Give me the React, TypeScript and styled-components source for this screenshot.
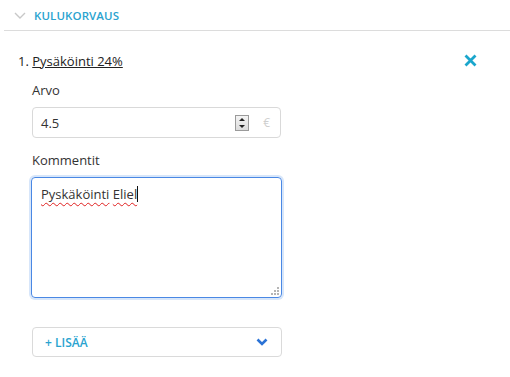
import React from "react";
import styled, { createGlobalStyle } from "styled-components";

const GlobalStyle = createGlobalStyle`
  html, body {
    margin: 0;
    padding: 0;
    background: #fff;
    font-family: "Open Sans", "Liberation Sans", sans-serif;
    color: #333;
  }
`;

const Page = styled.div`
  width: 510px;
  height: 377px;
  overflow: hidden;
`;

const SectionHeader = styled.div`
  display: flex;
  align-items: center;
  gap: 8px;
  height: 31px;
  margin-left: 4px;
  padding-left: 10px;
  border-bottom: 1px solid #dcdcdc;
  box-sizing: border-box;
`;

const SectionTitle = styled.span`
  font-size: 11.5px;
  font-weight: 600;
  color: #2aa3cf;
  letter-spacing: 0.1px;
`;

const Body = styled.div`
  padding: 21px 32px 0 18px;
`;

const ItemRow = styled.div`
  display: flex;
  align-items: center;
  justify-content: space-between;
  height: 18px;
`;

const ItemTitle = styled.span`
  font-size: 13px;
  color: #222;

  a {
    color: #222;
    text-decoration: underline;
  }
`;

const CloseButton = styled.button`
  border: 0;
  background: none;
  padding: 0;
  width: 14px;
  height: 14px;
  display: flex;
  cursor: pointer;
`;

const Fields = styled.div`
  padding-left: 14px;
  display: flex;
  flex-direction: column;
`;

const Label = styled.div<{ $top: number }>`
  font-size: 13px;
  color: #333;
  margin-top: ${(p) => p.$top}px;
  margin-bottom: 8px;
  line-height: 18px;
`;

const InputBox = styled.div`
  width: 249px;
  height: 31px;
  box-sizing: border-box;
  border: 1px solid #d9d9d9;
  border-radius: 4px;
  display: flex;
  align-items: center;
  padding: 0 8px 0 8px;
  font-size: 13px;
  color: #333;
`;

const InputValue = styled.span`
  flex: 1;
`;

const Spinner = styled.div`
  width: 12px;
  height: 14px;
  border: 1px solid #9a9a9a;
  background: linear-gradient(#f4f4f4, #dcdcdc);
  display: flex;
  flex-direction: column;
  align-items: center;
  justify-content: space-around;
  margin-right: 14px;
`;

const Arrow = styled.div<{ $up?: boolean }>`
  width: 0;
  height: 0;
  border-left: 3px solid transparent;
  border-right: 3px solid transparent;
  ${(p) =>
    p.$up ? "border-bottom: 3px solid #222;" : "border-top: 3px solid #222;"}
`;

const Currency = styled.span`
  color: #cfcfcf;
  font-size: 12px;
  margin-right: 2px;
`;

const TextArea = styled.div`
  position: relative;
  width: 251px;
  height: 121px;
  box-sizing: border-box;
  border: 1px solid #4a88e4;
  border-radius: 4px;
  box-shadow: 0 0 0 2px #d7e6fa;
  padding: 7px 9px;
  font-size: 13px;
  color: #333;
  margin-left: -1px;
`;

const Misspelled = styled.span`
  text-decoration: underline wavy #e02020;
  text-decoration-thickness: 1px;
  text-underline-offset: 3px;
`;

const Caret = styled.span`
  display: inline-block;
  width: 1px;
  height: 16px;
  background: #111;
  vertical-align: -3px;
`;

const Grip = styled.svg`
  position: absolute;
  right: 2px;
  bottom: 2px;
`;

const AddButton = styled.button`
  margin-top: 29px;
  width: 250px;
  height: 30px;
  box-sizing: border-box;
  border: 1px solid #dadada;
  border-radius: 4px;
  background: #fff;
  display: flex;
  align-items: center;
  justify-content: space-between;
  padding: 0 13px 0 12px;
  font-family: inherit;
  font-size: 12px;
  font-weight: 600;
  color: #2aa3cf;
`;

export default function App() {
  return (
    <Page>
      <GlobalStyle />
      <SectionHeader>
        <svg width="12" height="7" viewBox="0 0 12 7">
          <path d="M1 1 L6 6 L11 1" fill="none" stroke="#c8c8c8" strokeWidth="1.4" />
        </svg>
        <SectionTitle>KULUKORVAUS</SectionTitle>
      </SectionHeader>
      <Body>
        <ItemRow>
          <ItemTitle>
            1. <a>Pysäköinti 24%</a>
          </ItemTitle>
          <CloseButton>
            <svg width="13" height="13" viewBox="0 0 13 13">
              <path d="M1.5 1.5 L11.5 11.5 M11.5 1.5 L1.5 11.5" stroke="#1aa6cc" strokeWidth="2.8" />
            </svg>
          </CloseButton>
        </ItemRow>
        <Fields>
          <Label $top={11}>Arvo</Label>
          <InputBox>
            <InputValue>4.5</InputValue>
            <Spinner>
              <Arrow $up />
              <Arrow />
            </Spinner>
            <Currency>€</Currency>
          </InputBox>
          <Label $top={13}>Kommentit</Label>
          <TextArea>
            <Misspelled>Pyskäköinti</Misspelled> <Misspelled>Eliel</Misspelled>
            <Caret />
            <Grip width="8" height="8" viewBox="0 0 8 8">
              <g fill="#b5b5b5">
                <rect x="6" y="0" width="2" height="2" />
                <rect x="3" y="3" width="2" height="2" />
                <rect x="6" y="3" width="2" height="2" />
                <rect x="0" y="6" width="2" height="2" />
                <rect x="3" y="6" width="2" height="2" />
                <rect x="6" y="6" width="2" height="2" />
              </g>
            </Grip>
          </TextArea>
          <AddButton>
            <span>+ LISÄÄ</span>
            <svg width="12" height="8" viewBox="0 0 12 8">
              <path d="M1.5 1.5 L6 6 L10.5 1.5" fill="none" stroke="#2b73d6" strokeWidth="2.6" />
            </svg>
          </AddButton>
        </Fields>
      </Body>
    </Page>
  );
}
